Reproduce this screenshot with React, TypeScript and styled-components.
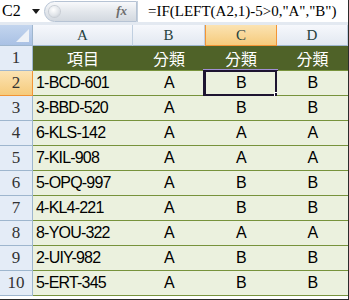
import React from 'react';
import styled, { createGlobalStyle, css } from 'styled-components';

const GlobalStyle = createGlobalStyle`
	html, body {
		margin: 0;
		padding: 0;
		background: #ffffff;
		overflow: hidden;
	}
`;

const serif = `"Liberation Serif", "Noto Sans CJK TC", serif`;
const sans = `"Liberation Sans", "Noto Sans CJK TC", sans-serif`;

const Frame = styled.div`
	width: 349px;
	height: 300px;
	box-sizing: border-box;
	border-right: 1px solid #2b2b2b;
	border-bottom: 1px solid #2b2b2b;
	display: flex;
	flex-direction: column;
	overflow: hidden;
`;

const FormulaBar = styled.div`
	display: flex;
	align-items: center;
	height: 25px;
	box-sizing: border-box;
	border-bottom: 3px solid #e3e9f1;
	background: #ffffff;
`;

const NameBox = styled.div`
	width: 44px;
	display: flex;
	align-items: center;
	justify-content: space-between;
	padding: 0 4px 0 2px;
	box-sizing: border-box;
	font-family: ${serif};
	font-size: 16px;
	color: #000;
`;

const DropArrow = styled.span`
	width: 0;
	height: 0;
	border-left: 4px solid transparent;
	border-right: 4px solid transparent;
	border-top: 5px solid #1a1a1a;
`;

const FxPill = styled.div`
	width: 93px;
	height: 21px;
	display: flex;
	align-items: center;
	justify-content: space-between;
	padding: 0 9px 0 4px;
	box-sizing: border-box;
	border: 1px solid #b6c3d4;
	border-radius: 11px 0 0 11px;
	background: linear-gradient(#f8f9fb 0%, #e3e7ec 50%, #d3d9e0 100%);
`;

const Knob = styled.span`
	width: 11px;
	height: 11px;
	border-radius: 50%;
	background: radial-gradient(circle at 40% 35%, #ffffff 0%, #dfe3e8 60%, #b9c0c8 100%);
	box-shadow: 0 0 0 1px #c8cdd4;
`;

const FxLabel = styled.span`
	font-family: ${serif};
	font-style: italic;
	font-weight: bold;
	font-size: 13px;
	color: #6d6d6d;
`;

const FormulaText = styled.div`
	flex: 1;
	height: 21px;
	display: flex;
	align-items: center;
	padding-left: 10px;
	border-left: 1px solid #c5d0dd;
	font-family: ${serif};
	font-size: 15px;
	color: #000;
	white-space: nowrap;
`;

const Sheet = styled.div`
	display: grid;
	grid-template-columns: 33px 100px 72px 72px 71px;
	grid-template-rows: 21px repeat(10, 25px);
`;

const Corner = styled.div`
	position: relative;
	box-sizing: border-box;
	border-right: 1px solid #9eb6ce;
	border-bottom: 1px solid #9eb6ce;
	background: linear-gradient(#c3d5ee, #a9c1e4);
	&::after {
		content: '';
		position: absolute;
		right: 3px;
		bottom: 3px;
		border-left: 13px solid transparent;
		border-bottom: 13px solid #eef2f7;
	}
`;

const ColHead = styled.div<{ $active?: boolean }>`
	display: flex;
	align-items: center;
	justify-content: center;
	box-sizing: border-box;
	border-right: 1px solid #c0cfe0;
	border-bottom: 1px solid #9eb6ce;
	background: linear-gradient(#f6f8fc, #e2e8f1);
	font-family: ${serif};
	font-size: 15px;
	color: #27413e;
	${p =>
		p.$active &&
		css`
			background: linear-gradient(#fbe3b3, #f6cb7c);
			border: 1px solid #f29536;
			border-top: none;
		`}
`;

const RowHead = styled.div<{ $active?: boolean }>`
	display: flex;
	align-items: flex-end;
	justify-content: center;
	padding-bottom: 2px;
	box-sizing: border-box;
	border-right: 1px solid #9eb6ce;
	border-bottom: 1px solid #9eb6ce;
	background: #e4ecf7;
	font-family: ${serif};
	font-size: 17px;
	color: #333;
	${p =>
		p.$active &&
		css`
			background: linear-gradient(#fbe3b3, #f6cb7c);
			border-right-color: #f29536;
			border-bottom-color: #f29536;
		`}
`;

const Cell = styled.div<{ $head?: boolean; $left?: boolean; $selected?: boolean }>`
	position: relative;
	display: flex;
	align-items: center;
	justify-content: ${p => (p.$left ? 'flex-start' : 'center')};
	padding-left: ${p => (p.$left ? '3px' : '0')};
	padding-bottom: 1px;
	box-sizing: border-box;
	border-bottom: 1px solid #77933c;
	background: #ebf1de;
	font-family: ${sans};
	font-size: 16px;
	letter-spacing: -0.8px;
	color: #000;
	${p =>
		p.$head &&
		css`
			background: #4f6228;
			color: #ffffff;
			font-size: 16px;
			letter-spacing: 0;
			padding-left: 0;
			justify-content: center;
		`}
	${p =>
		p.$selected &&
		css`
			&::before {
				content: '';
				position: absolute;
				left: -2px;
				top: -1px;
				right: -1px;
				bottom: -2px;
				border: 3px solid #1d1530;
				border-top-width: 2px;
				box-shadow: 0 -1px 0 #a08fd4;
			}
			&::after {
				content: '';
				position: absolute;
				right: -4px;
				bottom: -4px;
				width: 5px;
				height: 5px;
				background: #1d1530;
				border: 1px solid #ffffff;
			}
		`}
`;

const rows = [
	['1-BCD-601', 'A', 'B', 'B'],
	['3-BBD-520', 'A', 'B', 'B'],
	['6-KLS-142', 'A', 'A', 'A'],
	['7-KIL-908', 'A', 'A', 'A'],
	['5-OPQ-997', 'A', 'B', 'B'],
	['4-KL4-221', 'A', 'B', 'B'],
	['8-YOU-322', 'A', 'A', 'A'],
	['2-UIY-982', 'A', 'B', 'B'],
	['5-ERT-345', 'A', 'B', 'B']
];

export default function App() {
	return (
		<>
			<GlobalStyle />
			<Frame>
				<FormulaBar>
					<NameBox>
						C2
						<DropArrow />
					</NameBox>
					<FxPill>
						<Knob />
						<FxLabel>fx</FxLabel>
					</FxPill>
					<FormulaText>=IF(LEFT(A2,1)-5&gt;0,"A","B")</FormulaText>
				</FormulaBar>
				<Sheet>
					<Corner />
					{['A', 'B', 'C', 'D'].map(col => (
						<ColHead key={col} $active={col === 'C'}>
							{col}
						</ColHead>
					))}

					<RowHead>1</RowHead>
					<Cell $head>項目</Cell>
					<Cell $head>分類</Cell>
					<Cell $head>分類</Cell>
					<Cell $head>分類</Cell>

					{rows.map((row, i) => (
						<React.Fragment key={row[0]}>
							<RowHead $active={i === 0}>{i + 2}</RowHead>
							{row.map((value, j) => (
								<Cell key={j} $left={j === 0} $selected={i === 0 && j === 2}>
									{value}
								</Cell>
							))}
						</React.Fragment>
					))}
				</Sheet>
			</Frame>
		</>
	);
}
